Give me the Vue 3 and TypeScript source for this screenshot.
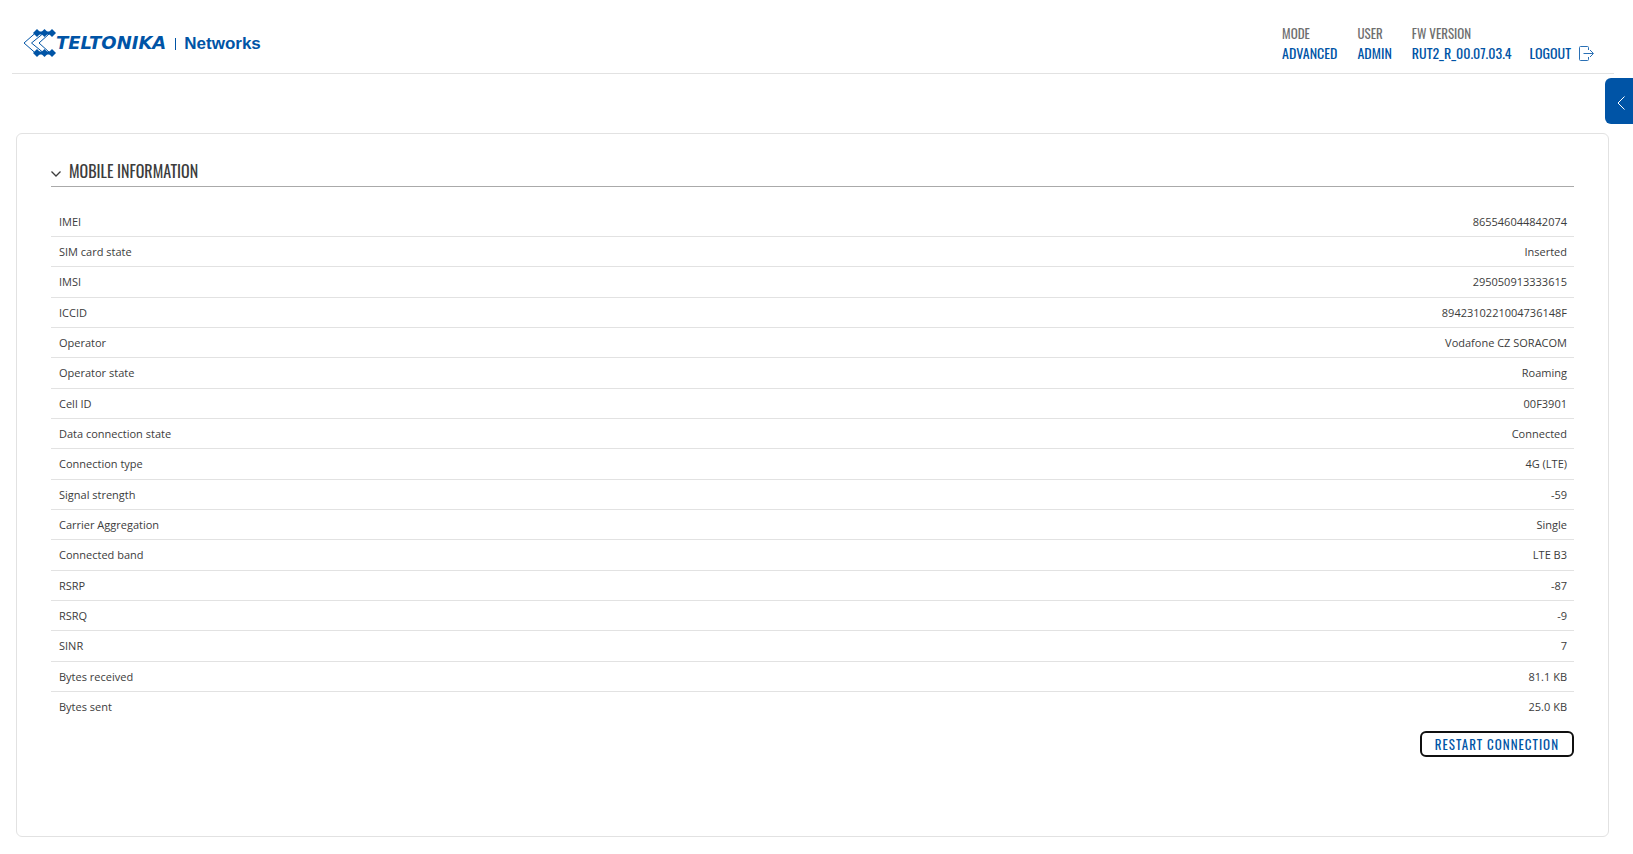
<script setup lang="ts">
import { ref } from 'vue'

interface InfoRow {
  label: string
  value: string
}

const open = ref(true)

const status: InfoRow[] = [
  { label: 'Mode', value: 'Advanced' },
  { label: 'User', value: 'Admin' },
  { label: 'FW version', value: 'RUT2_R_00.07.03.4' },
]

const rows: InfoRow[] = [
  { label: 'IMEI', value: '865546044842074' },
  { label: 'SIM card state', value: 'Inserted' },
  { label: 'IMSI', value: '295050913333615' },
  { label: 'ICCID', value: '8942310221004736148F' },
  { label: 'Operator', value: 'Vodafone CZ SORACOM' },
  { label: 'Operator state', value: 'Roaming' },
  { label: 'Cell ID', value: '00F3901' },
  { label: 'Data connection state', value: 'Connected' },
  { label: 'Connection type', value: '4G (LTE)' },
  { label: 'Signal strength', value: '-59' },
  { label: 'Carrier Aggregation', value: 'Single' },
  { label: 'Connected band', value: 'LTE B3' },
  { label: 'RSRP', value: '-87' },
  { label: 'RSRQ', value: '-9' },
  { label: 'SINR', value: '7' },
  { label: 'Bytes received', value: '81.1 KB' },
  { label: 'Bytes sent', value: '25.0 KB' },
]
</script>

<template>
  <div class="page">
    <header class="topbar">
      <a class="brand" href="#" aria-label="Teltonika Networks">
        <svg class="brand-mark" width="33" height="28" viewBox="0 0 33 28" aria-hidden="true">
          <g fill="none" stroke="#0054a6" stroke-width="1">
            <path d="M13 3.500 1 14l12 10.500" />
            <path d="M19.500 5 8.500 14l11 9" />
            <path d="M26 5 16 14l10 9" />
          </g>
          <g fill="#0054a6">
            <path d="M14 0l4 4-4 4-4-4zM21.500 0l4 4-4 4-4-4zM29 0l4 4-4 4-4-4z" />
            <path d="M14 20l4 4-4 4-4-4zM21.500 20l4 4-4 4-4-4zM29 20l4 4-4 4-4-4z" />
            <path d="M12 2.500h18v3H12zM12 22.500h18v3H12z" />
          </g>
        </svg>
        <span class="brand-name">TELTONIKA</span>
        <span class="brand-unit">Networks</span>
      </a>
      <div class="status">
        <dl class="facts">
          <div v-for="item in status" :key="item.label" class="fact">
            <dt>{{ item.label }}</dt>
            <dd><a href="#">{{ item.value }}</a></dd>
          </div>
        </dl>
        <button class="logout" type="button">
          Logout
          <svg width="15" height="15" viewBox="0 0 15 15" fill="none" stroke="#2a70b5" aria-hidden="true">
            <path d="M9.500 4V1.500a1 1 0 0 0-1-1h-7a1 1 0 0 0-1 1v12a1 1 0 0 0 1 1h7a1 1 0 0 0 1-1V11" />
            <path d="M4.500 7.500h9.500M11 4l3.500 3.500L11 11" />
          </svg>
        </button>
      </div>
    </header>

    <button class="drawer" type="button" aria-label="Open side panel">
      <svg width="8" height="14" viewBox="0 0 8 14" fill="none" stroke="#fff" aria-hidden="true">
        <path d="M7.500.5 1 7l6.500 6.500" />
      </svg>
    </button>

    <main class="card">
      <h2 class="title">
        <button type="button" :aria-expanded="open" @click="open = !open">
          <svg width="10" height="6" viewBox="0 0 10 6" fill="none" stroke="#3c3c3c" stroke-width="1.300" aria-hidden="true">
            <path d="M.5.5 5 5l4.500-4.500" />
          </svg>
          Mobile information
        </button>
      </h2>
      <template v-if="open">
        <table class="info">
          <tbody>
            <tr v-for="row in rows" :key="row.label">
              <th scope="row">{{ row.label }}</th>
              <td>{{ row.value }}</td>
            </tr>
          </tbody>
        </table>
        <div class="actions">
          <button class="restart" type="button">Restart connection</button>
        </div>
      </template>
    </main>
  </div>
</template>

<style>
body {
  margin: 0;
  background: #fff;
}
</style>

<style scoped>
.page {
  --blue: #0054a6;
  --line: #e2e2e2;
  --narrow: "Oswald", "Roboto Condensed", "Liberation Sans Narrow", "Liberation Sans", sans-serif;
  position: relative;
  color: #3c3c3c;
  font: 11px/17px "Open Sans", sans-serif;
}

button {
  margin: 0;
  padding: 0;
  border: 0;
  background: none;
  color: inherit;
  font: inherit;
  text-transform: inherit;
  cursor: pointer;
}

a {
  color: inherit;
  text-decoration: none;
}

.topbar {
  display: flex;
  justify-content: space-between;
  align-items: flex-start;
  box-sizing: border-box;
  height: 74px;
  margin: 0 19px 0 12px;
  padding: 23px 20px 0 11px;
  border-bottom: 1px solid var(--line);
}

.brand {
  display: flex;
  align-items: center;
  margin-top: 5px;
  color: var(--blue);
  font-weight: 700;
  line-height: 28px;
}

.brand-name {
  font-family: "DejaVu Sans", sans-serif;
  font-size: 18px;
  font-style: italic;
}

.brand-unit {
  display: flex;
  align-items: center;
  gap: 8px;
  margin-left: 9px;
  padding-top: 2px;
  font-family: "Liberation Sans", sans-serif;
  font-size: 17px;
}

.brand-unit::before {
  content: "";
  width: 1px;
  height: 12px;
  background: var(--blue);
}

.status {
  display: flex;
  align-items: flex-end;
  gap: 18px;
  font-family: var(--narrow);
  font-size: 14px;
  line-height: 20px;
  text-transform: uppercase;
}

.facts {
  display: flex;
  gap: 20px;
  margin: 0;
}

.fact dt {
  color: #6e6e6e;
  font-size: 13px;
}

.fact dd {
  margin: 0;
  color: var(--blue);
}

.logout {
  display: flex;
  align-items: center;
  gap: 8px;
  color: var(--blue);
}

.drawer {
  position: absolute;
  top: 78px;
  right: 0;
  display: flex;
  align-items: center;
  justify-content: flex-end;
  width: 28px;
  height: 46px;
  padding: 4px 8px 0 0;
  border-radius: 6px 0 0 6px;
  background: var(--blue);
}

.card {
  margin: 59px 24px 17px 16px;
  padding: 24px 34px 79px;
  border: 1px solid var(--line);
  border-radius: 6px;
}

.title {
  margin: 0 0 20px;
  padding-bottom: 2px;
  border-bottom: 1px solid #aaa;
  font: 400 16px/26px var(--narrow);
  text-transform: uppercase;
}

.title button {
  display: flex;
  align-items: center;
  gap: 8px;
}

.title svg {
  margin-top: 6px;
}

.info {
  width: 100%;
  border-collapse: separate;
  border-spacing: 0;
}

.info th,
.info td {
  padding: 6px 7px 6px 8px;
  border-bottom: 1px solid var(--line);
  font-weight: 400;
  text-align: left;
}

.info td {
  text-align: right;
}

.info tr:nth-child(3n) > * {
  line-height: 18px;
}

.info tr:last-child > * {
  border-bottom: 0;
}

.actions {
  display: flex;
  justify-content: flex-end;
  margin-top: 10px;
}

.restart {
  padding: 0 13px;
  border: 2px solid #101010;
  border-radius: 6px;
  color: var(--blue);
  font: 400 13px/22px var(--narrow);
  letter-spacing: 1px;
  text-transform: uppercase;
}
</style>
